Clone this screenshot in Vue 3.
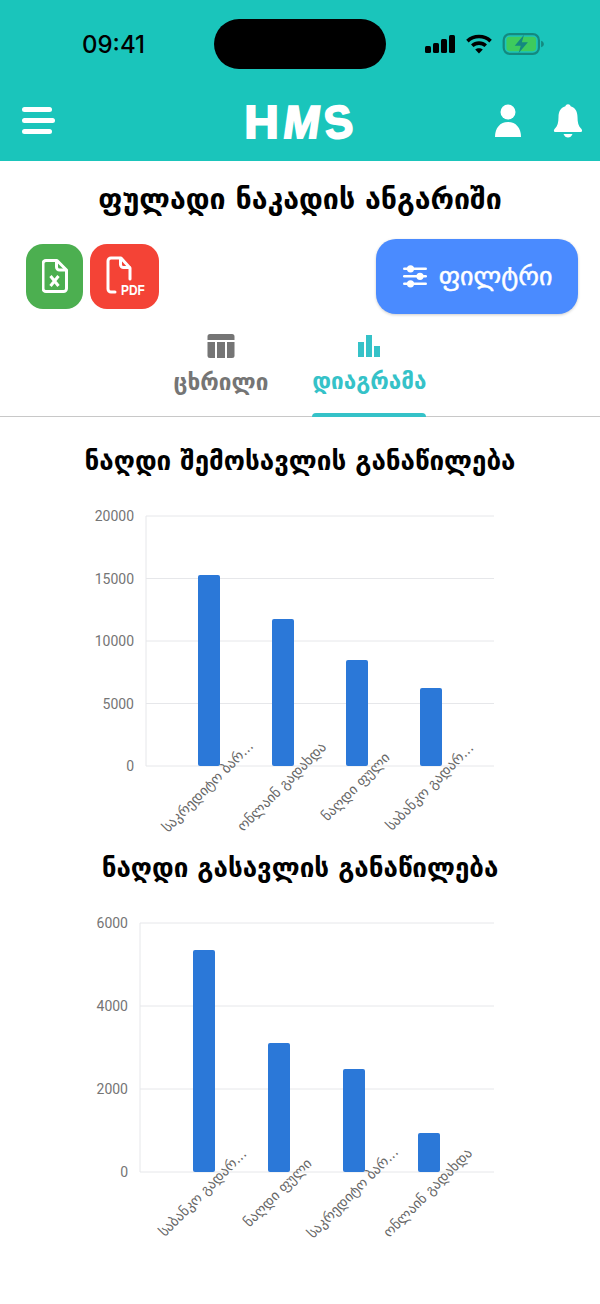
<template>
  <div class="page">
    <header class="top">
      <div class="status">
        <span class="time">09:41</span>
        <div class="island"></div>
        <div class="status-icons">
          <svg width="31" height="18" viewBox="0 0 31 18" fill="#000">
            <rect x="0" y="11" width="6" height="7" rx="1.5" />
            <rect x="8" y="8" width="6" height="10" rx="1.5" />
            <rect x="16" y="4" width="6" height="14" rx="1.5" />
            <rect x="24" y="0" width="6" height="18" rx="1.5" />
          </svg>
          <svg width="28" height="20" viewBox="0 0 26 19" fill="none" stroke="#000" stroke-width="3.4">
            <path d="M2 6.8C8 1 18 1 24 6.8" />
            <path d="M6.6 11.2c3.6-3.4 9.2-3.4 12.8 0" />
            <path d="M13 18.6l-3.6-3.8c2-1.8 5.2-1.8 7.2 0z" fill="#000" stroke="none" />
          </svg>
          <svg width="43" height="22" viewBox="0 0 38 20">
            <rect x="1" y="1" width="32" height="18" rx="5.5" fill="none" stroke="#14897f" stroke-width="2" />
            <rect x="3.5" y="3.5" width="27" height="13" rx="3" fill="#3ecb5d" />
            <path d="M35 7v6c1.5-.5 2.5-1.5 2.5-3S36.500 7.500 35 7z" fill="#14897f" />
            <path d="M19.500 1.500L11 11.500h5.500L14.500 18.500 23 8.500h-5.500z" fill="#14897f" />
          </svg>
        </div>
      </div>
      <div class="nav">
        <div class="burger"><i class="short"></i><i></i><i class="short"></i></div>
        <div class="logo"><span class="l-h">H</span><span class="l-m">M</span><span class="l-s">S</span></div>
        <div class="nav-right">
          <svg width="28" height="35" viewBox="0 0 28 34" fill="#fff">
            <circle cx="14" cy="8.500" r="7.500" />
            <path d="M1 33.500c0-9 5-15 13-15s13 6 13 15z" />
          </svg>
          <svg width="30" height="34" viewBox="0 0 30 34" fill="#fff">
            <circle cx="15" cy="2.800" r="2.600" />
            <path d="M15 2C8 2 5.500 7.500 5.500 13c0 5.500-1 9-3.500 11.500-1.500 1.500-1.500 3.500.5 3.500h25c2 0 2-2 .5-3.500-2.500-2.500-3.500-6-3.500-11.500 0-5.500-2.500-11-9.500-11z" />
            <path d="M10.500 30h9c-1 2.500-2.500 3.500-4.500 3.500s-3.500-1-4.500-3.500z" />
          </svg>
        </div>
      </div>
    </header>

    <h1 class="title">ფულადი ნაკადის ანგარიში</h1>

    <div class="actions">
      <div class="exports">
        <button class="exp green">
          <svg width="26" height="34" viewBox="0 0 26 34" fill="none" stroke="#fff" stroke-width="3" stroke-linejoin="round">
            <path d="M4 1.500h11l9.500 9.500v18.500a3 3 0 0 1-3 3H4a3 3 0 0 1-3-3v-25a3 3 0 0 1 3-3z" />
            <path d="M14.500 2v6a3 3 0 0 0 3 3h6.500" />
            <path d="M8.500 17l8 10M16.500 17l-8 10" stroke-width="3" />
          </svg>
        </button>
        <button class="exp red">
          <svg class="pdf-file" width="26" height="38" viewBox="0 0 26 38" fill="none" stroke="#fff" stroke-width="3" stroke-linejoin="round" stroke-linecap="round">
            <path d="M9 36H5a3 3 0 0 1-3-3V5a3 3 0 0 1 3-3h10l9 10v11" />
            <path d="M14.500 2.500v6a3 3 0 0 0 3 3h6" />
          </svg>
          <span class="pdf">PDF</span>
        </button>
      </div>
      <button class="filter">
        <svg width="26" height="24" viewBox="0 0 26 24" fill="#fff">
          <rect x="1" y="3.5" width="24" height="2.6" rx="1.3" />
          <rect x="1" y="11" width="24" height="2.6" rx="1.3" />
          <rect x="1" y="18.5" width="24" height="2.6" rx="1.3" />
          <circle cx="8.5" cy="4.8" r="3.6" />
          <circle cx="18" cy="12.3" r="3.6" />
          <circle cx="8.5" cy="19.8" r="3.6" />
        </svg>
        <span>ფილტრი</span>
      </button>
    </div>

    <div class="tabs">
      <div class="tab">
        <svg width="28" height="26" viewBox="0 0 28 26" fill="#757575">
          <path d="M3 1h22a2.500 2.500 0 0 1 2.500 2.500V7H.5V3.500A2.500 2.500 0 0 1 3 1z" />
          <path d="M.5 9H8v16H3a2.500 2.500 0 0 1-2.500-2.500z" />
          <rect x="10" y="9" width="8" height="16" />
          <path d="M20 9h7.500v13.500A2.500 2.500 0 0 1 25 25h-5z" />
        </svg>
        <span>ცხრილი</span>
      </div>
      <div class="tab active">
        <svg width="24" height="24" viewBox="0 0 24 24" fill="#35c2c8">
          <rect x="1" y="8" width="6" height="15" />
          <rect x="9" y="1" width="6" height="22" />
          <rect x="17" y="12" width="6" height="11" />
        </svg>
        <span>დიაგრამა</span>
      </div>
    </div>

    <section v-for="c in charts" :key="c.title" :class="c.cls">
      <h2>{{ c.title }}</h2>
      <svg class="chart" width="600" :height="c.height" :viewBox="`0 0 600 ${c.height}`">
        <g v-for="t in c.ticks" :key="t.label">
          <line :x1="c.axis" x2="494" :y1="t.y" :y2="t.y" stroke="#e6e7ea" />
          <text :x="c.axis - 12" :y="t.y + 5" text-anchor="end" class="tick">{{ t.label }}</text>
        </g>
        <line :x1="c.axis" :x2="c.axis" :y1="c.ticks[0].y" :y2="c.base" stroke="#e6e7ea" />
        <rect v-for="b in c.bars" :key="b.x" :x="b.x" :y="b.y" width="22" :height="c.base - b.y" rx="2" fill="#2b78d8" />
        <text
          v-for="b in c.bars" :key="b.label" class="cat" text-anchor="middle"
          :transform="`translate(${b.x + 13} ${c.base + 24}) rotate(-45)`"
        >{{ b.label }}</text>
      </svg>
    </section>
  </div>
</template>

<script setup>
// y values are relative to each chart's own svg
const charts = [
  {
    title: 'ნაღდი შემოსავლის განაწილება',
    cls: 'first',
    height: 340,
    axis: 146,
    base: 261,
    ticks: [
      { label: '20000', y: 11 },
      { label: '15000', y: 73.5 },
      { label: '10000', y: 136 },
      { label: '5000', y: 198.5 },
      { label: '0', y: 261 },
    ],
    bars: [
      { x: 198, y: 70, label: 'საკრედიტო ბარ...' },
      { x: 272, y: 114, label: 'ონლაინ გადახდა' },
      { x: 346, y: 155, label: 'ნაღდი ფული' },
      { x: 420, y: 183, label: 'საბანკო გადარ...' },
    ],
  },
  {
    title: 'ნაღდი გასავლის განაწილება',
    cls: 'second',
    height: 370,
    axis: 140,
    base: 281,
    ticks: [
      { label: '6000', y: 32 },
      { label: '4000', y: 115 },
      { label: '2000', y: 198 },
      { label: '0', y: 281 },
    ],
    bars: [
      { x: 193, y: 59, label: 'საბანკო გადარ...' },
      { x: 268, y: 152, label: 'ნაღდი ფული' },
      { x: 343, y: 178, label: 'საკრედიტო ბარ...' },
      { x: 418, y: 242, label: 'ონლაინ გადახდა' },
    ],
  },
]
</script>

<style>
html, body { margin: 0; background: #fff; }
</style>

<style scoped>
.page {
  width: 600px; height: 1304px; overflow: hidden; background: #fff; color: #000;
  font-family: "DejaVu Sans", "Noto Sans", sans-serif;
}
.top { height: 161px; background: #1ac5bb; }
.status { height: 88px; position: relative; display: flex; justify-content: space-between; align-items: center; padding: 0 55px 0 82px; box-sizing: border-box; }
.time { font-family: Inter, sans-serif; font-size: 24px; font-weight: 500; }
.island { position: absolute; left: 214px; top: 19px; width: 172px; height: 50px; border-radius: 25px; background: #000; }
.status-icons { display: flex; align-items: center; gap: 9px; }
.nav { height: 73px; display: flex; align-items: center; justify-content: space-between; padding: 0 17px 0 22px; position: relative; }
.burger { display: flex; flex-direction: column; gap: 6.5px; width: 33px; margin-top: -8px; }
.burger i { display: block; height: 4.5px; border-radius: 3px; background: #fff; width: 33px; }
.burger i.short { width: 30px; }
.logo { position: absolute; left: 245px; top: 9px; color: #fff; font-family: "Liberation Sans", sans-serif; font-weight: 700; font-size: 46px; line-height: 50px; display: flex; -webkit-text-stroke: 2px #fff; }
.l-h { width: 38px; transform: scaleX(1.04); }
.l-m { width: 40px; transform: skewX(-8deg) scaleX(.95); }
.l-s { width: 30px; transform: rotate(-8deg) scaleX(.92); }
.nav-right { display: flex; gap: 31px; align-items: center; margin-top: -8px; }
.title { margin: 0; height: 77px; line-height: 78px; text-align: center; font-size: 28.5px; font-weight: 700; }
.actions { display: flex; justify-content: space-between; align-items: center; padding: 0 22px 0 26px; height: 76px; }
.exports { display: flex; gap: 7px; }
.exp { border: none; padding: 0; height: 65px; display: flex; align-items: center; justify-content: center; border-radius: 17px; position: relative; }
.green { width: 57px; background: #4caf50; }
.red { width: 69px; background: #f44336; }
.pdf-file { margin: -3px 11px 0 0; }
.pdf { position: absolute; left: 31px; top: 38px; color: #fff; font-family: "Liberation Sans", sans-serif; font-weight: 700; font-size: 14px; transform: scaleX(.85); transform-origin: left; }
.filter { width: 202px; height: 75px; border: none; border-radius: 20px; background: #4a8bff; color: #fff; display: flex; align-items: center; justify-content: center; gap: 11px; font-family: inherit; font-size: 26px; -webkit-text-stroke: .5px #fff; box-shadow: 0 1px 3px rgba(0,0,0,.2); }
.tabs { height: 103px; border-bottom: 1.5px solid #c8c8c8; display: flex; justify-content: center; gap: 44px; box-sizing: border-box; }
.tab { position: relative; display: flex; flex-direction: column; align-items: center; gap: 10px; padding-top: 19px; color: #757575; font-size: 22.5px; font-weight: 700; }
.tab.active { color: #35c2c8; }
.tab.active svg { margin-top: 1px; }
.tab.active::after { content: ""; position: absolute; left: 0; right: 0; bottom: -1px; height: 4px; border-radius: 4px 4px 0 0; background: #35c2c8; }
h2 { margin: 0; text-align: center; font-size: 26px; font-weight: 700; }
.first h2 { height: 88px; line-height: 88px; }
.second h2 { height: 46px; line-height: 46px; }
.chart { display: block; }
.tick { font-family: Roboto, sans-serif; font-size: 14px; fill: #757575; }
.cat { font-size: 14px; fill: #666; }
</style>
